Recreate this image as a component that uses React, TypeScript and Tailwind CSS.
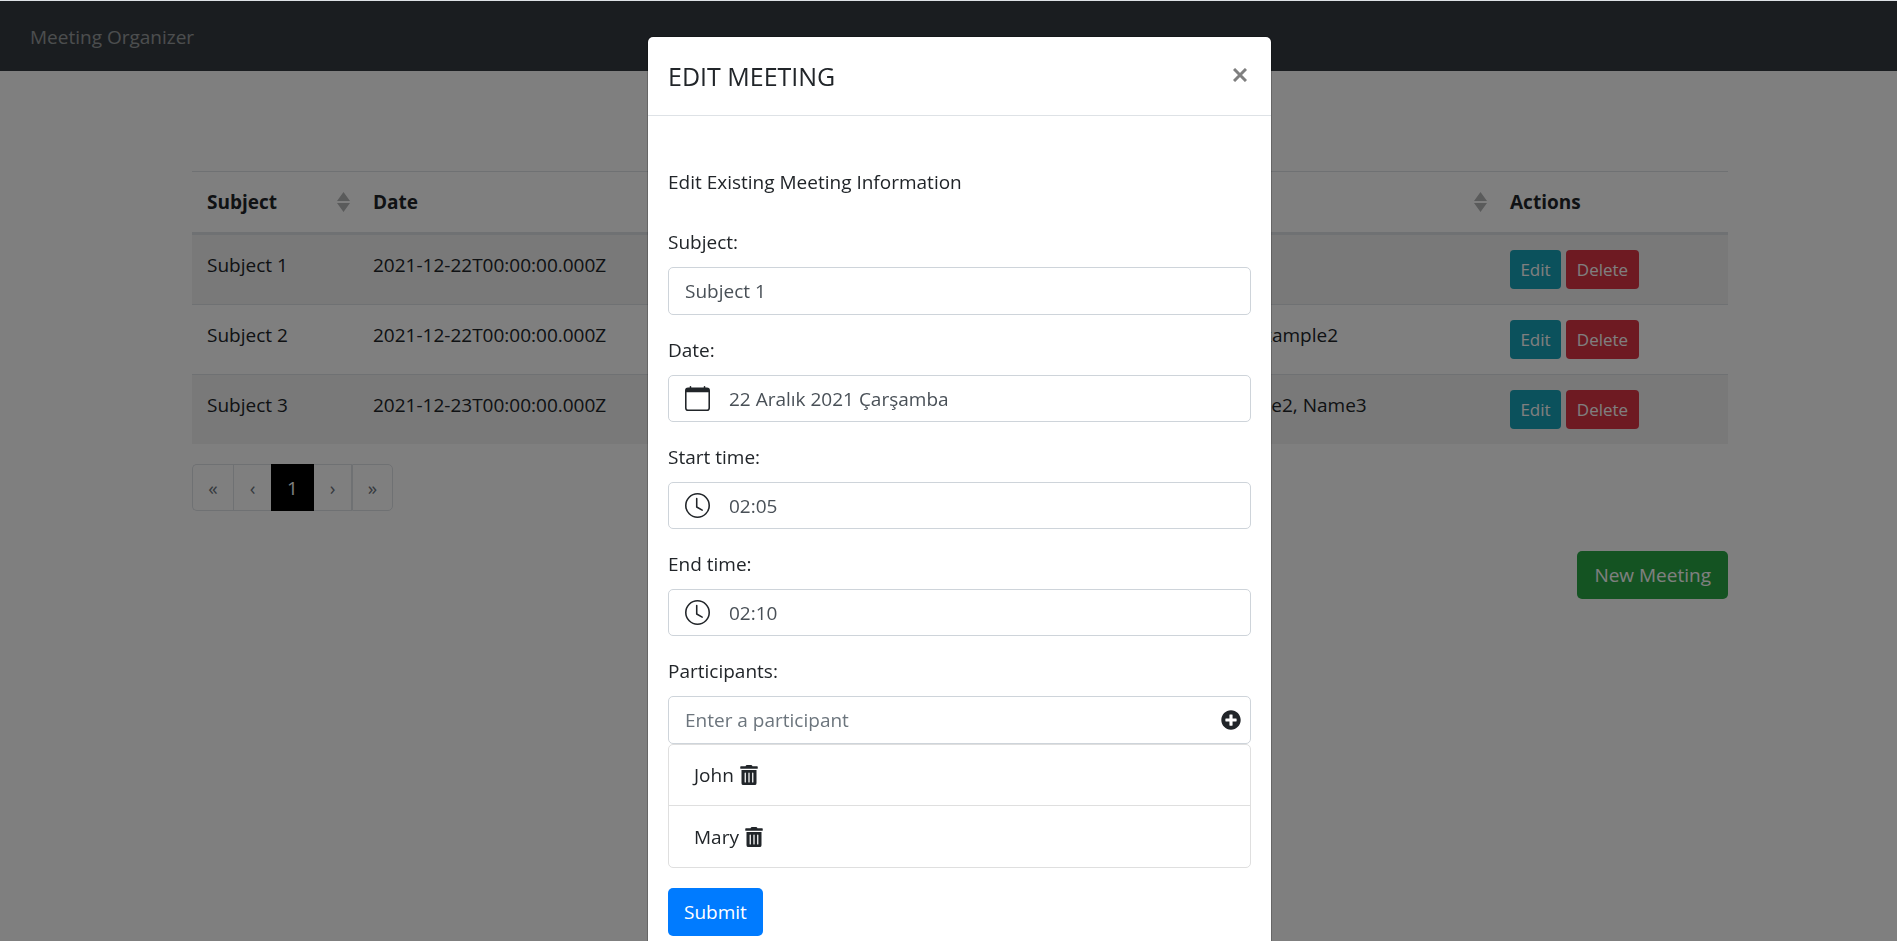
import { useState } from "react";
import { BsCalendar, BsClock } from "react-icons/bs";
import { FaTrashAlt, FaPlusCircle } from "react-icons/fa";

type Meeting = {
  subject: string;
  date: string;
  start: string;
  end: string;
  participants: string;
};

const meetings: Meeting[] = [
  { subject: "Subject 1", date: "2021-12-22T00:00:00.000Z", start: "02:05", end: "02:10", participants: "John, Mary" },
  { subject: "Subject 2", date: "2021-12-22T00:00:00.000Z", start: "03:00", end: "04:00", participants: "Example1, Example2" },
  { subject: "Subject 3", date: "2021-12-23T00:00:00.000Z", start: "05:00", end: "06:00", participants: "Name1, Name2, Name3" },
];

function SortIcon() {
  return (
    <svg viewBox="0 0 13 20" className="h-5 w-[13px] fill-[#b5b6b7]" aria-hidden="true">
      <path d="M6.5 0 13 9H0zM0 11h13l-6.5 9z" />
    </svg>
  );
}

function Heading({ label, sortable = true }: { label: string; sortable?: boolean }) {
  return (
    <th className="h-16 border-t border-b-3 border-[#dee2e6] pr-2 pl-[15px] text-left font-bold">
      <div className="flex items-center justify-between">
        {label}
        {sortable && <SortIcon />}
      </div>
    </th>
  );
}

function MeetingTable() {
  return (
    <table className="w-full table-fixed border-separate border-spacing-0">
      <colgroup>
        <col className="w-[166px]" />
        <col className="w-[602px]" />
        <col className="w-[90px]" />
        <col className="w-[90px]" />
        <col />
        <col className="w-[233px]" />
      </colgroup>
      <thead>
        <tr>
          <Heading label="Subject" />
          <Heading label="Date" />
          <Heading label="Start" />
          <Heading label="End" />
          <Heading label="Participants" />
          <Heading label="Actions" sortable={false} />
        </tr>
      </thead>
      <tbody className="[&_td]:h-[70px] [&_td]:border-[#dee2e6] [&_td]:px-[15px] [&_td]:pt-[15px] [&_td]:align-top [&_tr:first-child_td]:h-[69px] [&_tr:nth-child(odd)]:bg-black/5 [&_tr:not(:first-child)_td]:border-t">
        {meetings.map((m) => (
          <tr key={m.subject}>
            <td>{m.subject}</td>
            <td>{m.date}</td>
            <td>{m.start}</td>
            <td>{m.end}</td>
            <td>{m.participants}</td>
            <td>
              <div className="flex gap-[5px] text-[17px] text-white">
                <button type="button" className="h-[39px] w-[51px] rounded bg-[#17a2b8]">Edit</button>
                <button type="button" className="h-[39px] w-[73px] rounded bg-[#dc3545]">Delete</button>
              </div>
            </td>
          </tr>
        ))}
      </tbody>
    </table>
  );
}

function Pagination() {
  return (
    <nav aria-label="Pages" className="mt-5 flex h-[47px] w-[201px] text-[#6c757d]">
      <button type="button" aria-label="First page" className="w-[41px] rounded-l-[5px] border border-r-0 border-[#dee2e6]">«</button>
      <button type="button" aria-label="Previous page" className="w-[38px] border border-r-0 border-[#dee2e6]">‹</button>
      <button type="button" className="w-[43px] bg-black text-white">1</button>
      <button type="button" aria-label="Next page" className="w-[38px] border border-l-0 border-[#dee2e6]">›</button>
      <button type="button" aria-label="Last page" className="w-[41px] rounded-r-[5px] border border-[#dee2e6]">»</button>
    </nav>
  );
}

function PickerField({ id, label, value, icon }: { id: string; label: string; value: string; icon: React.ReactNode }) {
  return (
    <div className="mb-5">
      <label htmlFor={id} className="mb-2.5 block">{label}</label>
      <div className="flex h-[47px] items-center gap-[19px] rounded-[5px] border border-[#ced4da] px-4 text-[#495057]">
        <span className="text-[25px] text-[#212529]">{icon}</span>
        <input id={id} defaultValue={value} className="min-w-0 flex-1 outline-none" />
      </div>
    </div>
  );
}

function EditMeeting() {
  const [people, setPeople] = useState(["John", "Mary"]);
  const [name, setName] = useState("");
  const add = () => {
    if (name.trim()) setPeople([...people, name.trim()]);
    setName("");
  };

  return (
    <section role="dialog" aria-labelledby="dialog-title" className="w-[625px] rounded-md border border-black/20 bg-white bg-clip-padding">
      <header className="flex h-[79px] items-center justify-between border-b border-[#dee2e6] px-5">
        <h1 id="dialog-title" className="text-[25px] leading-[38px] font-medium">EDIT MEETING</h1>
        <button type="button" aria-label="Close" className="px-1 pb-0.5">
          <svg viewBox="0 0 14 14" className="size-[14px] stroke-[#7f7f7f] stroke-3" aria-hidden="true">
            <path d="M1 1l12 12M13 1L1 13" />
          </svg>
        </button>
      </header>
      <form className="px-5 pt-[51px] pb-5" onSubmit={(e) => e.preventDefault()}>
        <p className="mb-[30px]">Edit Existing Meeting Information</p>
        <div className="mb-5">
          <label htmlFor="subject" className="mb-2.5 block">Subject:</label>
          <input id="subject" defaultValue="Subject 1" className="block h-12 w-full rounded-[5px] border border-[#ced4da] px-4 text-[#495057] outline-none" />
        </div>
        <PickerField id="date" label="Date:" value="22 Aralık 2021 Çarşamba" icon={<BsCalendar />} />
        <PickerField id="start" label="Start time:" value="02:05" icon={<BsClock />} />
        <PickerField id="end" label="End time:" value="02:10" icon={<BsClock />} />
        <label htmlFor="participant" className="mb-2.5 block">Participants:</label>
        <div className="flex h-12 items-center rounded-[5px] border border-[#ced4da] pr-[9px] pl-4">
          <input
            id="participant"
            value={name}
            onChange={(e) => setName(e.target.value)}
            placeholder="Enter a participant"
            className="min-w-0 flex-1 outline-none placeholder:text-[#6c757d]"
          />
          <button type="button" aria-label="Add participant" onClick={add}>
            <FaPlusCircle className="size-5" />
          </button>
        </div>
        <ul className="mb-5 divide-y divide-[#dfdfdf] rounded-[5px] border border-[#dfdfdf]">
          {people.map((person) => (
            <li key={person} className="flex h-[61px] items-center gap-[5px] px-[25px]">
              {person}
              <button type="button" aria-label={`Remove ${person}`} onClick={() => setPeople(people.filter((p) => p !== person))}>
                <FaTrashAlt className="size-5" />
              </button>
            </li>
          ))}
        </ul>
        <button type="submit" className="h-12 rounded-[5px] bg-[#007bff] px-4 text-white">Submit</button>
      </form>
    </section>
  );
}

export default function App() {
  return (
    <div className="min-h-screen bg-white font-['Open_Sans','Noto_Sans',sans-serif] text-[19px] leading-[30px] text-[#212529]">
      <nav className="flex h-[71px] items-center bg-[#343a40] px-[30px] pt-0.5">
        <a href="#home" className="text-white/50">Meeting Organizer</a>
      </nav>
      <div className="pl-[23px]">
        <main className="mx-auto max-w-[1536px] pt-[100px]">
          <MeetingTable />
          <Pagination />
          <div className="mt-10 flex justify-end">
            <button type="button" className="h-12 rounded-[5px] bg-[#28a745] px-[17px] text-white">New Meeting</button>
          </div>
        </main>
      </div>
      <div className="fixed inset-0 flex items-start justify-center overflow-hidden border-t border-[#dee2e6] bg-black/50 pt-[35px] pl-[22px]">
        <EditMeeting />
      </div>
    </div>
  );
}
